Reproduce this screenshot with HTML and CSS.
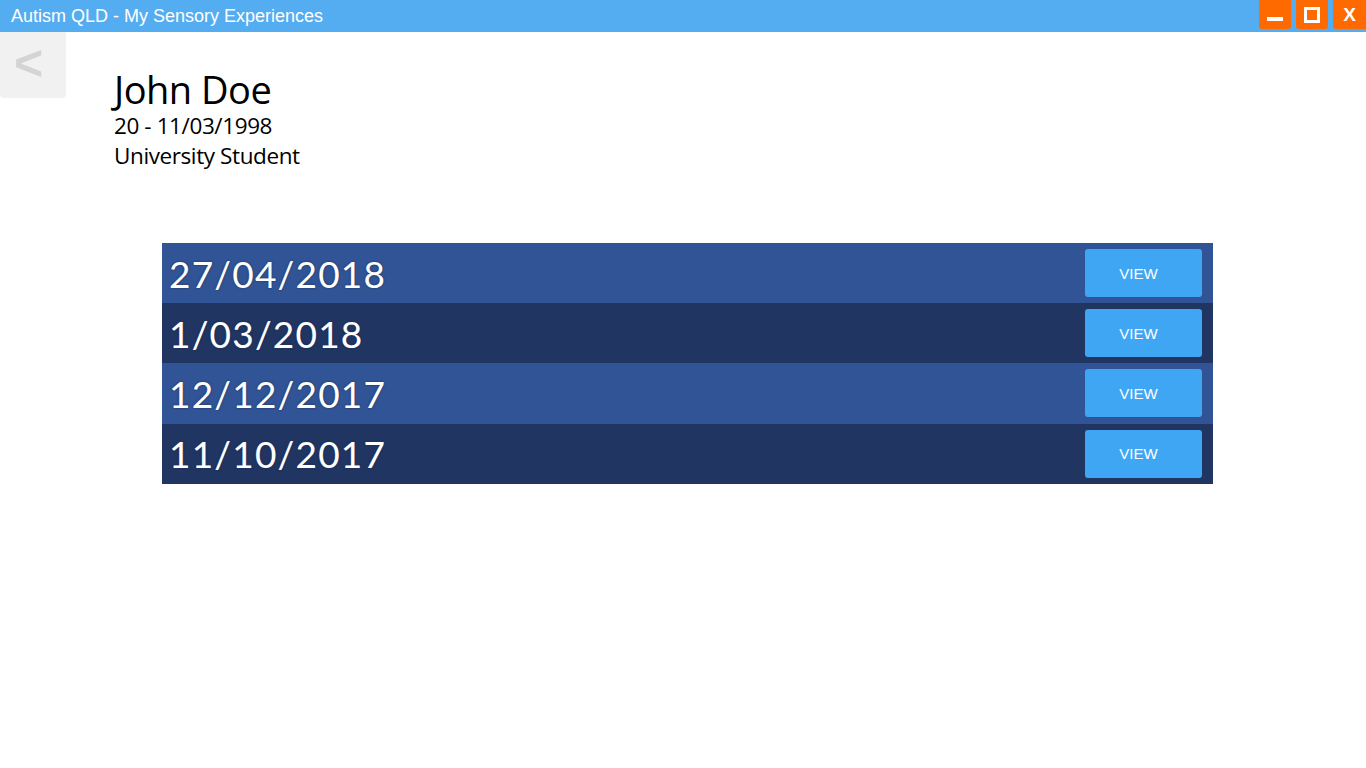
FILE: index.html
```html
<!DOCTYPE html>
<html>
<head>
<meta charset="utf-8">
<link rel="stylesheet" href="styles.css">
</head>
<body>
<div class="titlebar">
  <span class="title">Autism QLD - My Sensory Experiences</span>
  <div class="winbtns">
    <div class="wbtn"><span class="min"></span></div>
    <div class="wbtn"><span class="max"></span></div>
    <div class="wbtn close">X</div>
  </div>
</div>
<div class="main">
  <div class="back">&lt;</div>
  <div class="profile">
    <div class="name">John Doe</div>
    <div class="line">20 - 11/03/1998</div>
    <div class="line">University Student</div>
  </div>
</div>
<div class="list">
  <div class="row light"><span class="date">27/04/2018</span><button class="view">VIEW</button></div>
  <div class="row dark"><span class="date">1/03/2018</span><button class="view">VIEW</button></div>
  <div class="row light"><span class="date">12/12/2017</span><button class="view">VIEW</button></div>
  <div class="row dark"><span class="date">11/10/2017</span><button class="view">VIEW</button></div>
</div>
</body>
</html>
```
FILE: styles.css
```css
html, body { margin: 0; padding: 0; background: #fff; }
body { width: 1366px; height: 768px; overflow: hidden; font-family: "Liberation Sans", Arial, sans-serif; }

.titlebar {
  height: 32px;
  background: #55adf1;
  display: flex;
  align-items: flex-start;
  justify-content: space-between;
}
.title {
  color: #fff;
  font-size: 18px;
  line-height: 32px;
  padding-left: 11px;
}
.winbtns { display: flex; gap: 5px; }
.wbtn {
  width: 32px;
  height: 29px;
  background: #ff6a00;
  border-radius: 0 0 3px 3px;
  display: flex;
  align-items: center;
  justify-content: center;
  color: #fff;
  font-weight: bold;
  font-size: 19px;
}
.wbtn.close { width: 33px; border-radius: 0 0 0 3px; }
.min { width: 16px; height: 4px; background: #fff; margin-top: 8px; }
.max { width: 10px; height: 10px; border: 3px solid #fff; }

.main { display: flex; }
.back {
  width: 66px;
  height: 66px;
  background: #f1f1f1;
  border-radius: 0 0 4px 4px;
  color: #d4d4d4;
  font-size: 50px;
  font-weight: bold;
  font-family: "Liberation Sans", Arial, sans-serif;
  display: flex;
  align-items: center;
  justify-content: center;
  line-height: 1;
  padding: 0 9px 4px 0;
  box-sizing: border-box;
}
.profile {
  padding-left: 48px;
  padding-top: 35px;
  font-family: "Open Sans", sans-serif;
  color: #000;
}
.name { font-size: 38px; line-height: 44px; letter-spacing: -0.5px; }
.line { font-size: 22.5px; line-height: 30px; letter-spacing: -0.4px; }

.list {
  margin: 72px 0 0 162px;
  width: 1051px;
}
.row {
  height: 60px;
  display: flex;
  align-items: center;
  justify-content: space-between;
  padding: 0 11px 0 7px;
  box-sizing: border-box;
}
.row + .row { height: 60.3px; }
.light { background: #315496; }
.dark { background: #203562; }
.date {
  color: #fff;
  font-family: "Lato", sans-serif;
  font-size: 37px;
  letter-spacing: 1.2px;
  text-shadow: 0 0 2px rgba(10, 20, 50, 0.9), 0 0 1px rgba(150, 190, 255, 0.6);
}
.view {
  width: 117px;
  height: 48px;
  background: #3fa6f4;
  border: none;
  border-radius: 3px;
  color: #fff;
  font-family: "Liberation Sans", Arial, sans-serif;
  font-size: 15px;
  padding: 0 10px 0 0;
}
```
